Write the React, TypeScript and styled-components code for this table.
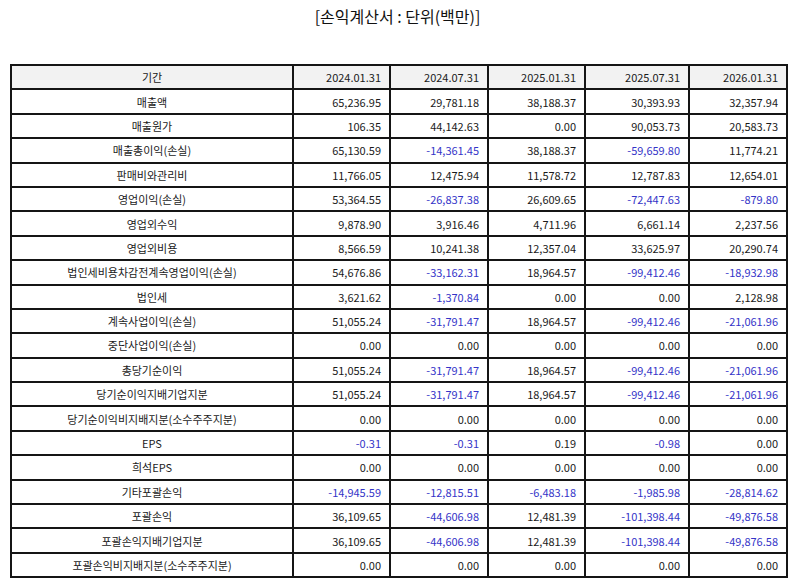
import styled, { createGlobalStyle } from 'styled-components';

const Global = createGlobalStyle`
    body {
        margin: 0;
        background: #fff;
        font-family: "Noto Sans CJK KR", "Noto Sans", sans-serif;
        color: #1a1a1a;
    }
`

const Page = styled.div`
    padding: 3px 9px 0 10px;
`

const Title = styled.h2`
    margin: 0;
    height: 31px;
    line-height: 26px;
    text-align: center;
    font-size: 16px;
    font-weight: 400;
    color: #111;
`

const Table = styled.table`
    margin-top: 30px;
    width: 776px;
    table-layout: fixed;
    border-collapse: collapse;
    font-size: 11px;
`

const Col = styled.col<{ $w: number }>`
    width: ${p => p.$w}px;
`

const Row = styled.tr`
    height: 24.4px;
`

const Head = styled.th<{ $date?: boolean }>`
    padding: 0 8px;
    border: 2px solid #151515;
    background: #f2f2f2;
    font-weight: 400;
    text-align: ${p => (p.$date ? 'right' : 'center')};
`

const Label = styled.td`
    padding: 0 8px;
    border: 2px solid #151515;
    text-align: center;
    white-space: nowrap;
`

const Num = styled.td<{ $neg: boolean }>`
    padding: 0 8px;
    border: 2px solid #151515;
    text-align: right;
    white-space: nowrap;
    color: ${p => (p.$neg ? '#3434c8' : '#1a1a1a')};
`

const periods = [
    { d: '2024.01.31', w: 97 },
    { d: '2024.07.31', w: 98 },
    { d: '2025.01.31', w: 97 },
    { d: '2025.07.31', w: 104 },
    { d: '2026.01.31', w: 98 },
]

const rows: [string, string[]][] = [
    ['매출액', ['65,236.95', '29,781.18', '38,188.37', '30,393.93', '32,357.94']],
    ['매출원가', ['106.35', '44,142.63', '0.00', '90,053.73', '20,583.73']],
    ['매출총이익(손실)', ['65,130.59', '-14,361.45', '38,188.37', '-59,659.80', '11,774.21']],
    ['판매비와관리비', ['11,766.05', '12,475.94', '11,578.72', '12,787.83', '12,654.01']],
    ['영업이익(손실)', ['53,364.55', '-26,837.38', '26,609.65', '-72,447.63', '-879.80']],
    ['영업외수익', ['9,878.90', '3,916.46', '4,711.96', '6,661.14', '2,237.56']],
    ['영업외비용', ['8,566.59', '10,241.38', '12,357.04', '33,625.97', '20,290.74']],
    ['법인세비용차감전계속영업이익(손실)', ['54,676.86', '-33,162.31', '18,964.57', '-99,412.46', '-18,932.98']],
    ['법인세', ['3,621.62', '-1,370.84', '0.00', '0.00', '2,128.98']],
    ['계속사업이익(손실)', ['51,055.24', '-31,791.47', '18,964.57', '-99,412.46', '-21,061.96']],
    ['중단사업이익(손실)', ['0.00', '0.00', '0.00', '0.00', '0.00']],
    ['총당기순이익', ['51,055.24', '-31,791.47', '18,964.57', '-99,412.46', '-21,061.96']],
    ['당기순이익지배기업지분', ['51,055.24', '-31,791.47', '18,964.57', '-99,412.46', '-21,061.96']],
    ['당기순이익비지배지분(소수주주지분)', ['0.00', '0.00', '0.00', '0.00', '0.00']],
    ['EPS', ['-0.31', '-0.31', '0.19', '-0.98', '0.00']],
    ['희석EPS', ['0.00', '0.00', '0.00', '0.00', '0.00']],
    ['기타포괄손익', ['-14,945.59', '-12,815.51', '-6,483.18', '-1,985.98', '-28,814.62']],
    ['포괄손익', ['36,109.65', '-44,606.98', '12,481.39', '-101,398.44', '-49,876.58']],
    ['포괄손익지배기업지분', ['36,109.65', '-44,606.98', '12,481.39', '-101,398.44', '-49,876.58']],
    ['포괄손익비지배지분(소수주주지분)', ['0.00', '0.00', '0.00', '0.00', '0.00']],
]

const App = () => {
    return (
        <Page>
            <Global />
            <Title>[손익계산서 : 단위(백만)]</Title>
            <Table>
                <colgroup>
                    <Col $w={282} />
                    {periods.map(p => <Col key={p.d} $w={p.w} />)}
                </colgroup>
                <thead>
                    <Row>
                        <Head>기간</Head>
                        {periods.map(p => <Head key={p.d} $date>{p.d}</Head>)}
                    </Row>
                </thead>
                <tbody>
                    {rows.map(([name, vals]) =>
                        <Row key={name}>
                            <Label>{name}</Label>
                            {vals.map((v, i) => <Num key={i} $neg={v.startsWith('-')}>{v}</Num>)}
                        </Row>
                    )}
                </tbody>
            </Table>
        </Page>
    )
}

export default App
